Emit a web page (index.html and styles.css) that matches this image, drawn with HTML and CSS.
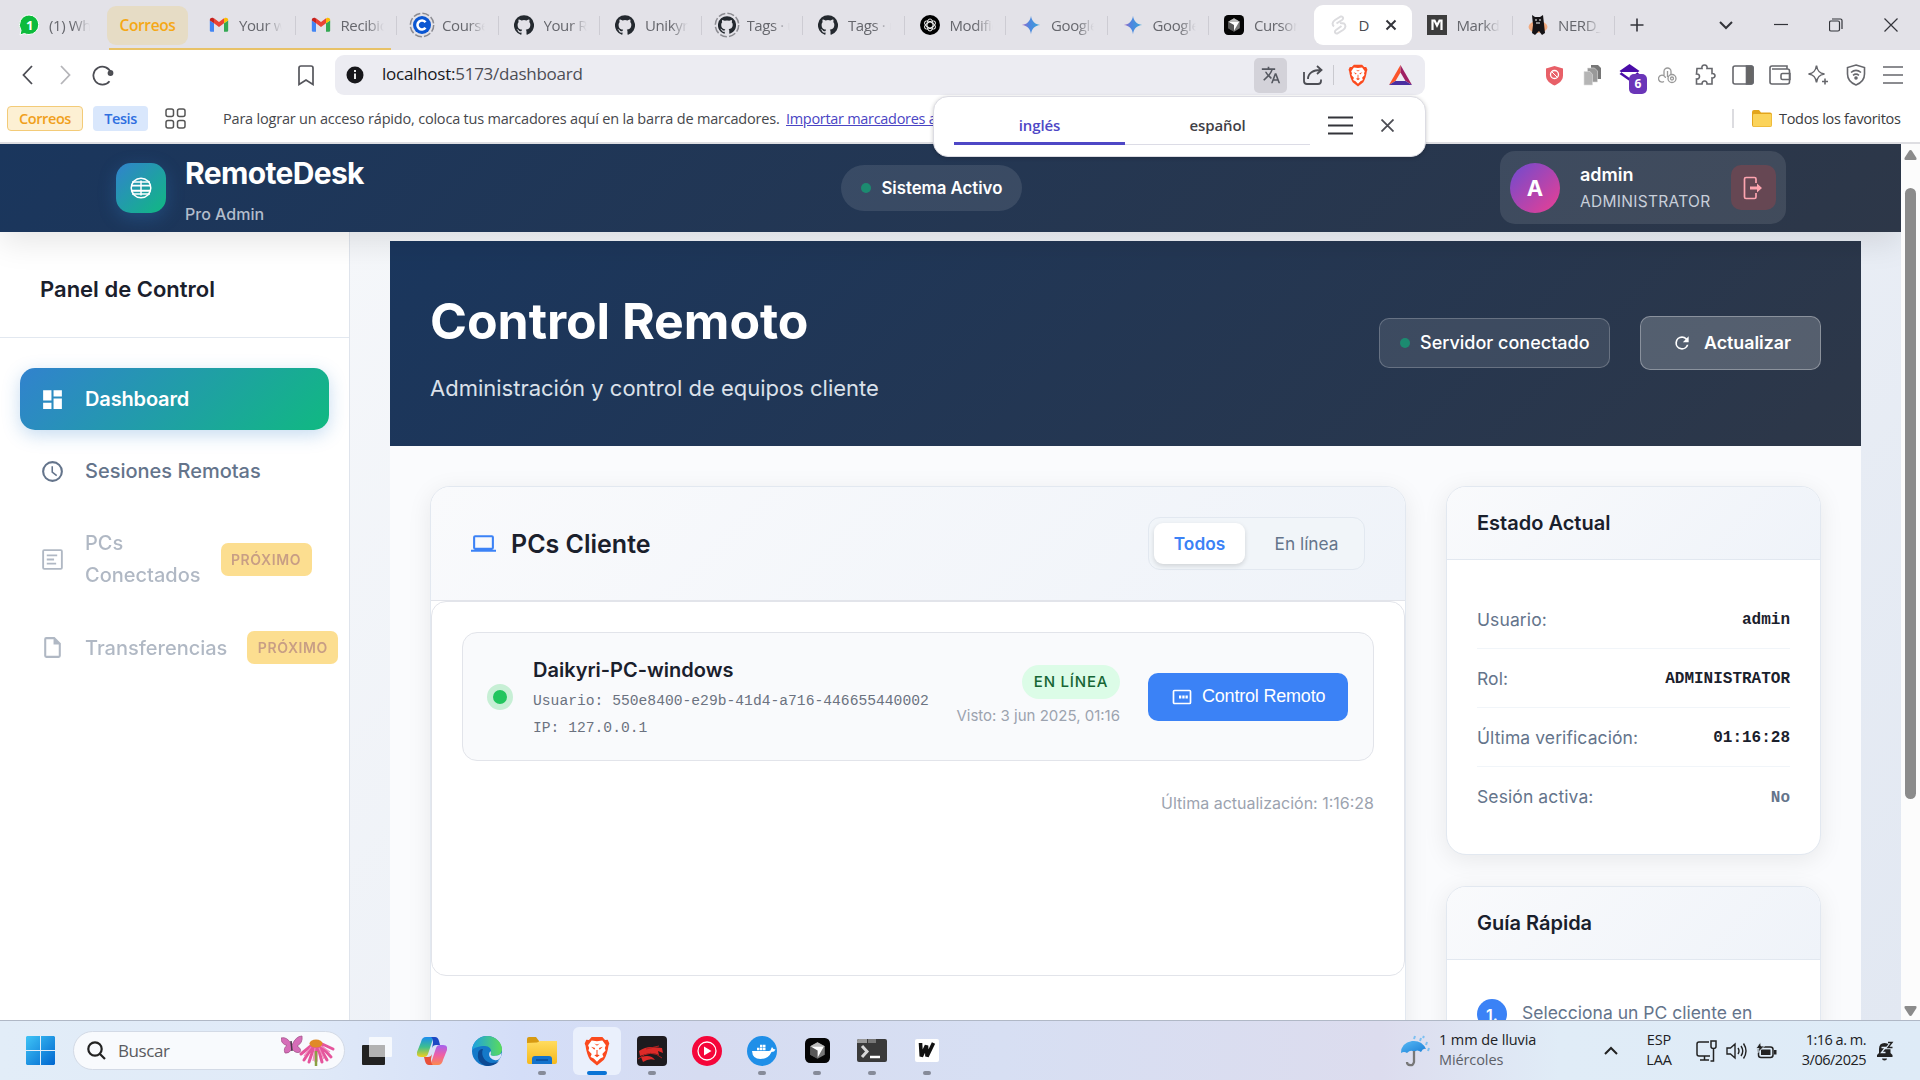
FILE: index.html
```html
<!DOCTYPE html>
<html lang="es">
<head>
<meta charset="utf-8">
<title>RemoteDesk - Dashboard</title>
<link rel="stylesheet" href="styles.css">
</head>
<body>
<svg class="defs" width="0" height="0" aria-hidden="true">
  <defs>
    <linearGradient id="gSpark" x1="0" x2="1"><stop offset="0" stop-color="#a567c0"/><stop offset=".4" stop-color="#4e86e0"/><stop offset="1" stop-color="#3aa6d8"/></linearGradient>
    <linearGradient id="gWin" x1="0" y1="0" x2="1" y2="1"><stop offset="0" stop-color="#3fc4f6"/><stop offset="1" stop-color="#0066cf"/></linearGradient>
    <linearGradient id="gEdge" x1="0" y1="0" x2="1" y2="0"><stop offset="0" stop-color="#1c9fe4"/><stop offset="1" stop-color="#5bdc5a"/></linearGradient>
    <linearGradient id="gFold" x1="0" y1="0" x2="0" y2="1"><stop offset="0" stop-color="#ffdc60"/><stop offset="1" stop-color="#f5b81c"/></linearGradient>
    <linearGradient id="gCopA" x1="0" y1="0" x2="0" y2="1"><stop offset="0" stop-color="#1b8cf0"/><stop offset=".5" stop-color="#3dbf8e"/><stop offset="1" stop-color="#f2cf1d"/></linearGradient>
    <linearGradient id="gCopB" x1="0" y1="0" x2="0" y2="1"><stop offset="0" stop-color="#a463f0"/><stop offset=".5" stop-color="#ee5fa6"/><stop offset="1" stop-color="#fb8a4f"/></linearGradient>
    <linearGradient id="gUmb" x1="0" y1="0" x2="1" y2="1"><stop offset="0" stop-color="#58b9f5"/><stop offset="1" stop-color="#1a7fd6"/></linearGradient>
    <symbol id="gmail" viewBox="0 0 24 24"><path fill="#4285f4" d="M2 20h4V10L1 6.500V19q0 1 1 1z"/><path fill="#34a853" d="M18 20h4q1 0 1-1V6.500l-5 3.500z"/><path fill="#ea4335" d="M6 10V4l6 4.500L18 4v6l-6 4.500z"/><path fill="#c5221f" d="M1 6c0-2.500 2.700-3.500 4.500-2.200L6 4.200V10L1 6.500z"/><path fill="#fbbc04" d="M23 6c0-2.500-2.700-3.500-4.500-2.200l-.5.4V10l5-3.500z"/></symbol>
    <symbol id="github" viewBox="0 0 24 24"><path fill="#24292f" d="M12 .3a12 12 0 0 0-3.800 23.400c.6.100.8-.3.8-.6v-2c-3.300.7-4-1.600-4-1.600-.6-1.400-1.400-1.800-1.400-1.800-1-.7.100-.7.100-.7 1.200 0 1.900 1.200 1.900 1.200 1 1.800 2.800 1.300 3.500 1 0-.8.400-1.300.7-1.600-2.700-.3-5.500-1.300-5.500-6 0-1.200.5-2.300 1.300-3.100-.2-.4-.6-1.600 0-3.200 0 0 1-.3 3.400 1.200a11.500 11.500 0 0 1 6 0c2.300-1.500 3.300-1.200 3.300-1.200.6 1.600.2 2.800 0 3.200.9.800 1.300 1.900 1.300 3.200 0 4.600-2.800 5.600-5.500 5.900.5.400.9 1 .9 2.200v3.300c0 .3.100.7.800.6A12 12 0 0 0 12 .3"/></symbol>
    <symbol id="spark" viewBox="0 0 24 24"><path fill="url(#gSpark)" d="M12 1c.8 6.500 4.500 10.200 11 11-6.500.8-10.200 4.500-11 11-.8-6.500-4.500-10.200-11-11 6.500-.8 10.200-4.500 11-11z"/></symbol>
    <symbol id="brave" viewBox="0 0 24 28"><path fill="#fb4a1e" d="M7 1h10l2.500 2.700L22 3.500 23.500 7l-.8 2.200c-.6 5-2.200 10-4.200 13L12 27.500 5.500 22.200c-2-3-3.600-8-4.200-13L.5 7 2 3.500l2.500.2z"/><path fill="#fff" d="M12 5l5-.8 3.300 4.500-1 2.500.7 2.300-3 3.200 1 2.800-3 1.500L12 24l-3-3-3-1.500 1-2.800-3-3.200.7-2.300-1-2.500L7 4.200z"/><path fill="#fb4a1e" d="M6.500 10l3.800 1.300-.8 1.500zM17.500 10l-3.800 1.300.8 1.500zM9.500 18l2.500-1 2.500 1-2.500 1.800zM11.500 13h1v4h-1zM9.500 7l2.500 1 2.500-1-2.500 2z"/></symbol>
    <symbol id="cursor" viewBox="0 0 24 24"><rect width="24" height="24" rx="5" fill="#050505"/><path fill="#777" d="M12 4l7 4v8l-7 4-7-4V8z"/><path fill="#bbb" d="M12 4l7 4-7 4-7-4z"/><path fill="#fff" d="M6 8.500h12L12 19v-7z"/><path fill="#444" d="M5 16V8l7 4v8z" opacity=".6"/></symbol>
  </defs>
</svg>

<div class="screen">
  <div class="tabstrip">
    <div class="pinned">
      <svg width="20" height="22" viewBox="0 0 20 22"><path d="M10 1a9.500 9.500 0 0 1 0 19.500c-2 0-3.300-.3-4.600-1L1 21l1-4.600A10 10 0 0 1 10 1z" fill="#0dbb3c" stroke="#fff" stroke-width="1"/><text x="7" y="16" class="wa-num">1</text></svg>
      <span class="tab-label tab-label--wa">(1) Wh</span>
    </div>
    <div class="group-chip">Correos</div>
    <div class="group-line"></div>
    <div class="tabs">
      <div class="tab"><svg width="20" height="20"><use href="#gmail"/></svg><span class="tab-label">Your w</span></div>
      <div class="tab"><svg width="20" height="20"><use href="#gmail"/></svg><span class="tab-label">Recibid</span></div>
      <div class="tab"><svg class="ringed" width="26" height="26" viewBox="0 0 26 26"><circle cx="13" cy="13" r="11.700" class="ring"/><circle cx="13" cy="13" r="9" fill="#0a56d2"/><path d="M16.500 10.200A4.500 4.500 0 1 0 16.500 15.800" fill="none" stroke="#fff" stroke-width="2.600"/></svg><span class="tab-label">Course</span></div>
      <div class="tab"><svg width="20" height="20"><use href="#github"/></svg><span class="tab-label">Your Re</span></div>
      <div class="tab"><svg width="20" height="20"><use href="#github"/></svg><span class="tab-label">Unikyri</span></div>
      <div class="tab"><svg class="ringed" width="26" height="26" viewBox="0 0 26 26"><circle cx="13" cy="13" r="11.700" class="ring"/><svg x="4" y="4" width="18" height="18"><use href="#github"/></svg></svg><span class="tab-label">Tags · u</span></div>
      <div class="tab"><svg width="20" height="20"><use href="#github"/></svg><span class="tab-label">Tags · u</span></div>
      <div class="tab"><svg width="20" height="20" viewBox="0 0 20 20"><circle cx="10" cy="10" r="10" fill="#000"/><g fill="none" stroke="#eee" stroke-width="1.100"><ellipse cx="10" cy="10" rx="3" ry="6"/><ellipse cx="10" cy="10" rx="3" ry="6" transform="rotate(60 10 10)"/><ellipse cx="10" cy="10" rx="3" ry="6" transform="rotate(120 10 10)"/></g></svg><span class="tab-label">Modific</span></div>
      <div class="tab"><svg width="20" height="20"><use href="#spark"/></svg><span class="tab-label">Google</span></div>
      <div class="tab"><svg width="20" height="20"><use href="#spark"/></svg><span class="tab-label">Google</span></div>
      <div class="tab tab--nosep"><svg width="20" height="20"><use href="#cursor"/></svg><span class="tab-label">Cursor</span></div>
      <div class="tab tab--active"><svg width="16" height="20" viewBox="0 0 16 20" fill="none" stroke="#dcdcdf" stroke-width="2"><path d="M5.500 8.500L11 5c2-1.500 1-4-1.200-3.500L4 5C1 7 1 10 3 11.500M10.500 11L5 15c-2 1.500-1 4 1.200 3.500L12 15c3-2 3-5 1-6.500L9 8"/></svg><span class="tab-d">D</span><svg width="12" height="12" viewBox="0 0 12 12" class="ln ln--2"><path d="M1.500 1.500l9 9M10.500 1.500l-9 9"/></svg></div>
      <div class="tab"><svg width="20" height="20" viewBox="0 0 20 20"><rect width="20" height="20" fill="#3d3d3d"/><path d="M5.500 15V5.500h2l2.500 5 2.500-5h2V15" fill="none" stroke="#fff" stroke-width="2.200"/></svg><span class="tab-label">Markdo</span></div>
      <div class="tab"><svg width="20" height="20" viewBox="0 0 20 20"><ellipse cx="10" cy="12" rx="9.500" ry="6" fill="#f2ab80"/><path d="M4 0l3 2h5l3-2 1 9 1 9-3 2-3-4-4 4-3-2 1-8z" fill="#151316"/><path d="M7 5h2M11 5h2M8 8h4" stroke="#fff"/></svg><span class="tab-label">NERD_</span></div>
    </div>
    <svg class="newtab ln ln--15" width="14" height="14" viewBox="0 0 14 14"><path d="M7 .500v13M.500 7h13"/></svg>
    <div class="winctl">
      <svg width="14" height="9" viewBox="0 0 14 9" class="ln ln--2"><path d="M1 1l6 6 6-6"/></svg>
      <svg width="14" height="14" viewBox="0 0 14 14" class="ln"><path d="M0 6.500h14"/></svg>
      <svg width="14" height="14" viewBox="0 0 14 14" class="ln"><rect x=".5" y="3" width="10" height="10" rx="1.500"/><path d="M3 1h8.500a1.500 1.500 0 0 1 1.500 1.500V11"/></svg>
      <svg width="14" height="14" viewBox="0 0 14 14" class="ln"><path d="M.5.5l13 13M13.500.500l-13 13"/></svg>
    </div>
  </div>

  <div class="toolbar">
    <div class="nav-icons">
      <svg width="11" height="20" viewBox="0 0 11 20" class="ln ln--18"><path d="M10 1L1.500 10 10 19"/></svg>
      <svg width="11" height="20" viewBox="0 0 11 20" class="ln ln--18 faint"><path d="M1 1l8.500 9L1 19"/></svg>
      <svg width="22" height="21" viewBox="0 0 22 21" class="ln ln--18"><path d="M17.500 16.200A9 9 0 1 1 19 8"/><circle cx="18.500" cy="8" r="2" fill="#555"/></svg>
    </div>
    <svg class="bm" width="16" height="21" viewBox="0 0 16 21"><path d="M1 3q0-2 2-2h10q2 0 2 2v16.500l-7-4.500-7 4.500z"/></svg>
    <div class="urlbar">
      <svg class="info" width="18" height="18" viewBox="0 0 18 18"><circle cx="9" cy="9" r="8.500" fill="#17171b"/><path d="M9 4v2M9 7.500V13" stroke="#fff" stroke-width="1.800"/></svg>
      <span class="url"><b>localhost:</b>5173/dashboard</span>
      <span class="translate-btn"><svg width="20" height="20" viewBox="0 0 24 24"><path fill="#555860" d="M12.870 15.070l-2.540-2.510.030-.030c1.740-1.940 2.980-4.170 3.710-6.530H17V4h-7V2H8v2H1v1.990h11.170C11.500 7.920 10.440 9.750 9 11.350 8.070 10.320 7.300 9.190 6.690 8h-2c.730 1.630 1.730 3.170 2.980 4.560l-5.090 5.020L4 19l5-5 3.110 3.110.760-2.040zM18.500 10h-2L12 22h2l1.120-3h4.750L21 22h2l-4.500-12zm-2.620 7l1.620-4.330L19.120 17h-3.240z"/></svg></span>
      <svg class="share ln ln--18" width="20" height="20" viewBox="0 0 20 20"><path d="M1 7v9q0 3 3 3h11q3 0 3-3v-1.500M5 14c0-6 5-9 13-9M14 1l4.500 4-4.500 4"/></svg>
      <i class="urlsep"></i>
      <svg class="brv" width="20" height="23"><use href="#brave"/></svg>
      <svg width="23" height="20" viewBox="0 0 23 20"><path d="M11.500 0L0 20l6.500-4 5-8.500z" fill="#fb542b"/><path d="M11.500 0L23 20l-6.500-4-5-8.500z" fill="#9e1f63"/><path d="M0 20h23l-6.500-4h-10z" fill="#4a2fa0"/></svg>
    </div>
    <div class="ext">
      <svg width="19" height="21" viewBox="0 0 19 21"><path d="M9.500 1L18 3.500v7c0 5-4 8-8.500 10C5 18.500 1 15.500 1 10.500v-7z" fill="#e86068"/><circle cx="9.500" cy="9.500" r="4" fill="none" stroke="#fff" stroke-width="1.300"/><path d="M7 7l5 5" stroke="#fff"/></svg>
      <svg width="19" height="22" viewBox="0 0 19 22"><path d="M8 1h7l3 3v11H8z" fill="#777"/><path d="M4.500 4h7l3 3v11h-10z" fill="#999" stroke="#ddd" stroke-width=".6"/><path d="M1 7.500h6l2.500 3V21H1z" fill="#b5b5b5" stroke="#ddd" stroke-width=".6"/></svg>
      <span class="ext-badge"><svg width="22" height="22" viewBox="0 0 22 22"><path d="M10.500 0l10 7-10 7-10-7zM.5 10l10 7 10-7-3-2H3z" fill="#4a0ca8"/></svg><em>6</em></span>
      <svg width="19" height="18" viewBox="0 0 19 18" fill="none" stroke="#999" stroke-width="1.300"><path d="M6 9V5.500a3.500 3.500 0 0 1 7 0V8"/><path d="M6 15.500A3.500 3.500 0 1 1 7.500 12"/><circle cx="14" cy="12.500" r="4"/><circle cx="14" cy="12.500" r="1.500"/><path d="M9.500 5v6"/></svg>
      <svg width="22" height="22" viewBox="0 0 22 22" class="tl"><path d="M3 4.500h5C7.500 2.500 8.500 1 10.500 1S13.500 2.500 13 4.500h5v5c4-.5 4 5 0 4.500v6h-5c.5-4-5-4-5 0H2.500v-5c4 .5 4-5.500 0-5z"/></svg>
      <svg width="22" height="20" viewBox="0 0 22 20" class="tl"><rect x="1" y="1" width="20" height="18" rx="2"/><path d="M14.500 1H19q2 0 2 2v14q0 2-2 2h-4.500z" fill="#666"/></svg>
      <svg width="22" height="20" viewBox="0 0 22 20" class="tl"><path d="M18 4V1H3Q1 1 1 3v14q0 2 2 2h15q2.500 0 2.500-2V6q0-2-2-2H3M21 8.500h-7.500q-1.500 0-1.500 1.500v3q0 1.500 1.500 1.500H21z"/></svg>
      <svg width="22" height="22" viewBox="0 0 22 22" class="tl"><path d="M9.500 1.500c.8 5.300 2.700 7.700 8 8.500-5.300.8-7.200 3.200-8 8.500-.8-5.300-2.700-7.700-8-8.500 5.300-.8 7.200-3.200 8-8.500zM18 14.500v6M15 17.500h6"/></svg>
      <svg width="20" height="22" viewBox="0 0 20 22" class="tl"><path d="M10 1l8.500 2.500V10c0 5.500-3.500 9-8.500 11-5-2-8.500-5.500-8.500-11V3.500zM5 8.500c3-2.500 7-2.500 10 0M7 11.300c2-1.500 4-1.500 6 0"/><circle cx="10" cy="14" r="1" fill="#666"/></svg>
      <svg width="20" height="18" viewBox="0 0 20 18" class="tl"><path d="M0 1h20M0 9h20M0 17h20"/></svg>
    </div>
  </div>

  <div class="bookmarks">
    <span class="bchip bchip--y">Correos</span>
    <span class="bchip bchip--b">Tesis</span>
    <svg class="grid" width="21" height="21" viewBox="0 0 21 21"><g fill="none" stroke="#555" stroke-width="1.500"><rect x="1" y="1" width="7.500" height="7.500" rx="2"/><rect x="12.500" y="1" width="7.500" height="7.500" rx="2"/><rect x="1" y="12.500" width="7.500" height="7.500" rx="2"/><rect x="12.500" y="12.500" width="7.500" height="7.500" rx="2"/></g></svg>
    <span class="bm-text">Para lograr un acceso rápido, coloca tus marcadores aquí en la barra de marcadores.</span>
    <a class="bm-link">Importar marcadores ahora</a>
    <i class="bm-sep"></i>
    <svg width="20" height="17" viewBox="0 0 20 17"><path d="M0 2q0-2 2-2h5l2 2.500h9q2 0 2 2V15q0 2-2 2H2q-2 0-2-2z" fill="#e3a51c"/><rect x="1" y="4" width="18.500" height="12.500" rx="1" fill="#fbd35a"/></svg>
    <span class="bm-all">Todos los favoritos</span>
  </div>

  <div class="popup">
    <span class="lang lang--on">inglés</span><span class="lang">español</span>
    <svg class="pmenu ln ln--2" width="25" height="19" viewBox="0 0 25 19"><path d="M0 1.500h25M0 9.500h25M0 17.500h25"/></svg>
    <svg class="pclose ln ln--18" width="13" height="13" viewBox="0 0 13 13"><path d="M.500.500l12 12M12.500.500l-12 12"/></svg>
  </div>

  <div class="viewport">
    <div class="app">
      <header class="header">
        <div class="brand">
          <div class="logo"><svg width="24" height="24" viewBox="0 0 24 24" fill="none" stroke="#fff" stroke-width="1.500"><circle cx="12" cy="12" r="9.800"/><path d="M12 4.500v15M3 6h18M3 18h18"/><path d="M2.500 9.600h19M2.500 14.800h19" stroke-width="1.900"/></svg></div>
          <div class="brand-text"><div class="brand-name">RemoteDesk</div><div class="brand-sub">Pro Admin</div></div>
        </div>
        <div class="sys"><i class="gdot"></i>Sistema Activo</div>
        <div class="user">
          <div class="avatar">A</div>
          <div class="user-text"><div class="user-name">admin</div><div class="user-role">ADMINISTRATOR</div></div>
          <div class="logout"><svg width="20" height="24" viewBox="0 0 20 24" fill="none" stroke="#fda4af" stroke-width="1.700"><path d="M13 7V3q0-1.500-1.500-1.500H3Q1.500 1.500 1.500 3v18q0 1.500 1.500 1.500h8.500Q13 22.500 13 21v-4"/><path d="M7 10.500h7V7.500l5 4.500-5 4.500v-3H7z" fill="#fda4af" stroke="none"/></svg></div>
        </div>
      </header>
      <div class="body">
        <aside class="side">
          <div class="side-title">Panel de Control</div>
          <nav class="nav">
            <div class="item item--on"><svg width="25" height="25" viewBox="0 0 24 24"><path fill="#fff" d="M13 3v6h8V3zM13 21h8V11h-8zM3 21h8v-6H3zM3 13h8V3H3z"/></svg><span>Dashboard</span></div>
            <div class="item"><svg width="25" height="25" viewBox="0 0 24 24"><path fill="#64748b" d="M12 20a8 8 0 1 0 0-16 8 8 0 0 0 0 16m0-18a10 10 0 1 1 0 20 10 10 0 0 1 0-20m.500 5v5.250l4 3-.900 1.200L11 13V7z"/></svg><span>Sesiones Remotas</span></div>
            <div class="item item--off"><svg width="25" height="25" viewBox="0 0 24 24" fill="none" stroke="#64748b" stroke-width="1.800"><rect x="3" y="3" width="18" height="18" rx="1"/><path d="M6.500 8h10M6.500 12h7M6.500 16h9"/></svg><span>PCs Conectados</span><em class="soon">PRÓXIMO</em></div>
            <div class="item item--off"><svg width="25" height="25" viewBox="0 0 24 24"><path fill="#64748b" d="M14 2H6a2 2 0 0 0-2 2v16a2 2 0 0 0 2 2h12a2 2 0 0 0 2-2V8zm4 18H6V4h7v5h5z"/></svg><span>Transferencias</span><em class="soon">PRÓXIMO</em></div>
          </nav>
        </aside>
        <main class="main">
          <div class="content">
            <section class="hero">
              <div><h1>Control Remoto</h1><p>Administración y control de equipos cliente</p></div>
              <div class="hero-actions">
                <div class="server"><i class="gdot"></i>Servidor conectado</div>
                <div class="refresh"><svg width="20" height="20" viewBox="0 0 24 24"><path fill="#fff" d="M17.650 6.350C16.200 4.900 14.210 4 12 4a8 8 0 1 0 7.730 10h-2.080A6 6 0 1 1 12 6c1.660 0 3.140.690 4.220 1.780L13 11h7V4z"/></svg>Actualizar</div>
              </div>
            </section>
            <div class="columns">
              <section class="card clients">
                <div class="clients-head">
                  <svg width="25" height="25" viewBox="0 0 24 24"><path fill="#3b82f6" d="M4 6h16v10H4zm16 12a2 2 0 0 0 2-2V6a2 2 0 0 0-2-2H4a2 2 0 0 0-2 2v10a2 2 0 0 0 2 2H0v2h24v-2z"/></svg>
                  <h2>PCs Cliente</h2>
                  <div class="toggle"><span class="on">Todos</span><span>En línea</span></div>
                </div>
                <div class="list">
                  <div class="pc">
                    <i class="online"></i>
                    <div class="pc-info"><div class="pc-name">Daikyri-PC-windows</div><div class="pc-mono">Usuario: 550e8400-e29b-41d4-a716-446655440002</div><div class="pc-mono">IP: 127.0.0.1</div></div>
                    <div class="pc-state"><span class="badge">EN LÍNEA</span><span class="seen">Visto: 3 jun 2025, 01:16</span></div>
                    <div class="ctl"><svg width="20" height="20" viewBox="0 0 20 20"><rect x="1.500" y="3.500" width="17" height="13" rx="1" fill="none" stroke="#fff" stroke-width="1.700"/><path d="M7 8.500h2.300v3H7zM10.300 8.500h2.300v3h-2.300zM13.500 8.500h2.300v3h-2.300z" fill="#fff"/></svg>Control Remoto</div>
                  </div>
                  <div class="updated">Última actualización: 1:16:28</div>
                </div>
              </section>
              <div class="right">
                <section class="card status">
                  <h3>Estado Actual</h3>
                  <dl>
                    <div><dt>Usuario:</dt><dd>admin</dd></div>
                    <div><dt>Rol:</dt><dd>ADMINISTRATOR</dd></div>
                    <div><dt>Última verificación:</dt><dd>01:16:28</dd></div>
                    <div><dt>Sesión activa:</dt><dd class="muted">No</dd></div>
                  </dl>
                </section>
                <section class="card guide">
                  <h3>Guía Rápida</h3>
                  <div class="step"><b>1.</b><span>Selecciona un PC cliente en</span></div>
                </section>
              </div>
            </div>
          </div>
        </main>
      </div>
    </div>
    <div class="scrollbar">
      <svg width="13" height="10" viewBox="0 0 13 10"><path d="M6.500 0q1 0 1.500 1l4.500 7q.5 2-1 2h-10q-1.500 0-1-2L5 1q.500-1 1.500-1z" fill="#8b8b8b"/></svg>
      <i class="thumb"></i>
      <svg width="13" height="10" viewBox="0 0 13 10"><path d="M6.500 10q1 0 1.500-1l4.500-7q.5-2-1-2h-10q-1.500 0-1 2L5 9q.500 1 1.500 1z" fill="#8b8b8b"/></svg>
    </div>
  </div>

  <div class="taskbar">
    <svg class="start" width="29" height="29" viewBox="0 0 29 29"><path fill="url(#gWin)" d="M1 0h13v14H0V1zM15 0h13l1 1v13H15zM0 15h14v14H1l-1-1zM15 15h14v13l-1 1H15z"/></svg>
    <div class="search">
      <svg width="19" height="19" viewBox="0 0 19 19" fill="none" stroke="#222" stroke-width="2.200"><circle cx="8" cy="8" r="6.700"/><path d="M13 13l5 5"/></svg>
      <span>Buscar</span>
      <svg class="flower" width="54" height="32" viewBox="0 0 54 32"><path d="M11 10Q6 1 0 3q0 6 6 7.500Q2 13 4 18q4 1 7-4 4 5 8 3 2-3-3-6 6-3 5-10-6 0-10 9z" fill="#d66db8" stroke="#a4568c" stroke-width=".8"/><path d="M10 6l1 10" stroke="#4b3a4a" stroke-width="1.500"/><g stroke="#e5559c" stroke-width="3" stroke-linecap="round"><path d="M31 10L20 19M32 11l-9 14M33 12l-5 15M35 12v14M37 12l4 15M38 11l8 14M39 10l11 12M39 8l13 6"/></g><g stroke="#f08cbc" stroke-width="1.200"><path d="M30 12l-7 9M34 13l-2 13M38 13l5 11M40 11l9 6"/></g><path d="M35 16v15" stroke="#8aa043" stroke-width="2.500"/><ellipse cx="35" cy="8.500" rx="6.500" ry="4" fill="#e08a28"/></svg>
    </div>
    <div class="apps">
      <span><svg width="30" height="28" viewBox="0 0 30 28"><rect x="0" y="8" width="23" height="20" rx="1" fill="#222"/><rect x="7" y="0" width="23" height="20" rx="1" fill="#fff" opacity=".75"/><path d="M7 8h16v12H7z" fill="#aaa" opacity=".7"/></svg></span>
      <span><svg width="30" height="28" viewBox="0 0 30 28"><path d="M9 0h9l-2 2-5 15q-1 3-4 3H4q-5 0-4-5L4 5q1-5 5-5z" fill="url(#gCopA)"/><path d="M21 28h-9l2-2 5-15q1-3 4-3h3q5 0 4 5l-4 10q-1 5-5 5z" fill="url(#gCopB)"/><path d="M14 0h4q3 0 4 4l1 4h-4q-3 0-4 3l1-5q0-5-2-6z" fill="#1c49c4"/><path d="M16 28h-4q-3 0-4-4l-1-4h4q3 0 4-3l-1 5q0 5 2 6z" fill="#e8503a"/></svg></span>
      <span><svg width="30" height="30" viewBox="0 0 30 30"><circle cx="15" cy="15" r="15" fill="#1479c9"/><path d="M0 14C1 5 8 0 15 0c9 0 15 7 15 13 0 5-4 7-8 7-3 0-4-1-3-3 1-4-2-7-6-7-6 0-11 2-13 4z" fill="url(#gEdge)"/><path d="M11 13c-3 7 3 14 9 14 3 0 5-1 7-2-3 4-8 5-12 5C9 29 5 24 6 18c0-3 2-5 5-5z" fill="#0c4a94"/><path d="M19 17c-1 2 0 3 3 3 3 0 6-1 7.500-3 0 5-3 8-7 7-5-1-7-6-4-9z" fill="#dfe6f8"/></svg></span>
      <span class="run"><svg width="30" height="27" viewBox="0 0 30 27"><path d="M0 2q0-2 2-2h7l3 4v6H0z" fill="#d79a12"/><path d="M0 6l10-.5L13 4h17v21q0 2-2 2H2q-2 0-2-2z" fill="url(#gFold)"/><path d="M5 27v-5q0-3 3-3h14q3 0 3 3v5z" fill="#1372cc"/><path d="M9 23h12" stroke="#0a4d99" stroke-width="1.500"/></svg></span>
      <span class="run run--on"><svg width="26" height="30"><use href="#brave"/></svg></span>
      <span class="run"><svg width="30" height="30" viewBox="0 0 30 30"><rect width="30" height="30" rx="4" fill="#1d1a1e"/><path d="M2 15q6-4 12-4l11 1 1 5-5-2 1 4q-8-4-19 1zM4 21q10-3 14 3-6-2-12 2z" fill="#dd2a28"/><path d="M1 23q13-11 24-1M9 13l13-3" stroke="#b3201f" fill="none"/></svg></span>
      <span><svg width="30" height="30" viewBox="0 0 30 30"><circle cx="15" cy="15" r="15" fill="#f5063a"/><circle cx="15" cy="15" r="9" fill="none" stroke="#fff" stroke-width="1.300"/><path d="M12 10.500v9l7.500-4.500z" fill="#fff"/></svg></span>
      <span class="run"><svg width="30" height="30" viewBox="0 0 30 30"><circle cx="15" cy="15" r="15" fill="#1f8fe8"/><path d="M5 15h17q2 0 2-2l1-2 1.500 2 2 .500q-1 2.500-4 2.500-3 7-11 7-8 0-8.500-8zM10 11.800h2.500v2.500H10zM13 11.800h2.500v2.500H13zM16 11.800h2.500v2.500H16zM13 8.800h2.500v2.500H13zM16 8.800h2.500v2.500H16z" fill="#fff"/></svg></span>
      <span class="run"><svg width="25" height="25"><use href="#cursor"/></svg></span>
      <span class="run"><svg width="30" height="23" viewBox="0 0 30 23"><rect width="30" height="23" rx="2" fill="#3a3a3a"/><path d="M0 4V2q0-2 2-2h8v4z" fill="#999"/><path d="M11 0h8v4h-8z" fill="#777"/><path d="M5 7l5 5.500-5 5.500" fill="none" stroke="#d8d8d8" stroke-width="3"/><path d="M13 18h10" stroke="#fff" stroke-width="2.500"/></svg></span>
      <span class="run"><svg width="24" height="23" viewBox="0 0 24 23"><rect width="24" height="23" rx="2" fill="#fff"/><path d="M5.500 4l.8 13.500 5.200-11 .5 11L18.500 4" fill="none" stroke="#111" stroke-width="3.600"/></svg></span>
    </div>
    <div class="weather"><svg width="30" height="32" viewBox="0 0 30 32"><path d="M0 18Q0 8 11 6q10-1 14 8-3-1-5 3-4-3-7 0-3-3-7 1-3-2-6 0z" fill="url(#gUmb)"/><path d="M13 16v11q-1 4-4 3-3 0-3-3" fill="none" stroke="#777" stroke-width="2.300"/><path d="M14 1l-1 3M20 3l-1 3M26 7l-1 3M23 1l-1 2M28 13l-1 3" stroke="#7cc0f2" stroke-width="2"/></svg>
      <div><div>1 mm de lluvia</div><div class="dim">Miércoles</div></div></div>
    <svg class="up" width="14" height="9" viewBox="0 0 14 9" fill="none" stroke="#222" stroke-width="2"><path d="M1 8l6-6 6 6"/></svg>
    <div class="kbd"><div>ESP</div><div>LAA</div></div>
    <div class="tray">
      <svg width="21" height="22" viewBox="0 0 21 22" fill="none" stroke="#222" stroke-width="1.500"><path d="M13 2H3Q1 2 1 4v10q0 2 2 2h11M4 20h9M8.500 16v4M17.500 9v12h-3M15 1h5v5.500q0 2-2.500 2T15 6.500z"/></svg>
      <svg width="21" height="18" viewBox="0 0 21 18" fill="none" stroke="#222" stroke-width="1.400"><path d="M1 6h3.500L9 2v14l-4.500-4H1zM12 6q2 3 0 6M15 4q3.500 5 0 10M17.500 1.500q5 7.500 0 15"/></svg>
      <svg width="21" height="17" viewBox="0 0 21 17"><rect x="2.500" y="5" width="14.500" height="10.500" rx="2.500" fill="none" stroke="#222" stroke-width="1.500"/><rect x="5" y="7.500" width="9.500" height="5.500" fill="#222"/><path d="M18 8h2.500v4.500H18z" fill="#222"/><path d="M4.500 0L0 6.500h3L1.500 11 8.500 4H5z" fill="#222" stroke="#e0ecf7" stroke-width=".8"/></svg>
    </div>
    <div class="clock"><div>1:16 a. m.</div><div>3/06/2025</div></div>
    <svg class="bell" width="18" height="20" viewBox="0 0 18 20"><path d="M1 16v-2l2-2V8q0-6 5.500-6 6 0 6 6v4l2 2v2zM6 17.500h5q0 2-2.500 2t-2.500-2z" fill="#222"/><path d="M5.500 6.500h4l-4 5h4" fill="none" stroke="#e0ecf7" stroke-width="1.300"/><path d="M12 1.500h4l-4 5h4.500" fill="none" stroke="#e0ecf7" stroke-width="3.500"/><path d="M12 1.500h4l-4 5h4.500" fill="none" stroke="#222" stroke-width="1.400"/></svg>
  </div>
</div>
</body>
</html>
```
FILE: styles.css
```css
* { box-sizing: border-box; }
body { margin: 0; background: #fff; font-family: Inter, "Liberation Sans", sans-serif; }
svg { display: block; flex: none; }
em, i { font-style: normal; }
.defs { position: absolute; }
.screen { position: relative; width: 1920px; height: 1080px; overflow: hidden; display: flex; flex-direction: column; }
.ln { fill: none; stroke: #33343a; stroke-width: 1.2; }
.ln--15 { stroke-width: 1.6; }
.ln--18 { stroke-width: 1.8; stroke: #4c4d54; }
.ln--2 { stroke-width: 2; }
.faint { stroke: #b5b5b9; }
.tl { fill: none; stroke: #66676c; stroke-width: 1.6; }

/* browser chrome */
.tabstrip, .toolbar, .bookmarks, .popup, .taskbar { font-family: "Open Sans", "Noto Sans", sans-serif; }
.tabstrip { position: relative; height: 50px; flex: none; background: #e3e2e8; display: flex; align-items: center; }
.tabstrip > * { flex: none; }
.pinned { width: 107px; padding-left: 19px; display: flex; align-items: center; gap: 10px; }
.wa-num { font: bold 13px "Open Sans", sans-serif; fill: #fff; }
.group-chip { width: 81px; height: 39px; border-radius: 9px; background: #e6dcc5; color: #f5a816; font-weight: 600; font-size: 15.5px; letter-spacing: -.4px; line-height: 39px; text-align: center; }
.group-line { position: absolute; left: 109px; top: 48px; width: 282px; height: 2px; background: #e8c267; }
.tabs { display: flex; margin-left: 7px; }
.tab { width: 101.5px; flex: none; height: 40px; display: flex; align-items: center; gap: 10px; padding-left: 14px; position: relative; }
.tab::after { content: ""; position: absolute; right: 1px; top: 11px; width: 1px; height: 19px; background: #cdccd3; }
.tab--nosep::after, .tab--active::after { display: none; }
.ringed { margin: 0 -3px; }
.ring { fill: none; stroke: #8b8b91; stroke-width: 1.5; stroke-dasharray: 7 2.2; }
.tab-label { width: 43px; overflow: hidden; white-space: nowrap; color: #66676d; font-size: 15px; letter-spacing: -.4px; -webkit-mask-image: linear-gradient(90deg, #000 60%, transparent 100%); }
.tab-label--wa { width: 41px; }
.tab--active { width: 98px; margin: 0 1px 0 2px; background: #fff; border-radius: 9px; padding-left: 17px; gap: 0; }
.tab-d { font-size: 15px; width: 28px; padding-left: 12px; margin-right: 10px; color: #4a4b50; }
.newtab { margin-left: 14px; }
.winctl { margin-left: auto; margin-right: 22px; width: 179px; display: flex; justify-content: space-between; align-items: center; }
.toolbar { height: 50px; flex: none; display: flex; align-items: center; }
.nav-icons { display: flex; width: 298px; padding-left: 22px; gap: 27px; align-items: center; }
.nav-icons svg:last-child { margin-left: -6px; }
.bm { fill: none; stroke: #55565c; stroke-width: 1.7; margin-right: 21px; }
.urlbar { width: 1090px; height: 40px; border-radius: 9px; background: #ececf2; display: flex; align-items: center; padding-left: 11px; }
.url { font-size: 17px; letter-spacing: -.25px; line-height: 24px; margin: -2px 0 0 18px; color: #4d4e55; }
.url b { font-weight: 400; color: #17181c; }
.translate-btn { margin-left: auto; width: 33px; height: 35px; border-radius: 5px; background: #d3d2d9; display: grid; place-items: center; }
.share { margin-left: 16px; }
.urlsep { width: 1px; height: 20px; background: #c9c9cf; margin: 0 14px 0 10px; }
.brv { margin-right: 21px; }
.urlbar > svg:last-child { margin-right: 13px; }
.ext { margin-left: auto; width: 376px; margin-right: 8px; display: grid; grid-template-columns: repeat(10, 37.6px); justify-items: center; align-items: center; }
.ext-badge { position: relative; }
.ext-badge em { position: absolute; left: 10px; top: 10px; width: 18px; height: 20px; border-radius: 5px; background: #6a35b8; color: #fff; font: 700 12px/20px "Open Sans", sans-serif; text-align: center; }
.bookmarks { height: 44px; flex: none; display: flex; align-items: center; padding: 0 17px 5px 7px; border-bottom: 2px solid #dedee2; font-size: 14.5px; white-space: nowrap; }
.bchip { height: 25px; border-radius: 4px; line-height: 23px; text-align: center; font-weight: 600; letter-spacing: -.4px; }
.bchip--y { width: 76px; border: 1.5px solid #f3cb78; background: #fdf0d3; color: #f0a01c; }
.bchip--b { width: 55px; margin-left: 10px; line-height: 25px; background: #d9e7fc; color: #2f6fe0; }
.grid { margin-left: 17px; }
.bm-text { margin-left: 37px; width: 563px; color: #46474c; letter-spacing: -.2px; }
.bm-link { width: 190px; overflow: hidden; color: #4a45c4; text-decoration: underline; letter-spacing: -.3px; }
.bm-sep { margin-left: auto; width: 2px; height: 19px; background: #dcdce0; margin-right: 18px; }
.bm-all { margin-left: 7px; width: 124px; letter-spacing: -.3px; color: #3a3b40; }
.popup { position: absolute; z-index: 5; left: 933px; top: 96px; width: 493px; height: 61px; border-radius: 15px; background: #fff; border: 1px solid #dcdce3; box-shadow: 0 1px 4px rgba(0,0,0,.2); padding: 0 0 2px 20px; display: flex; align-items: center; font-size: 15px; font-weight: 600; color: #3f4046; }
.lang { width: 185px; height: 38px; line-height: 37px; text-align: center; margin-top: 1px; border-bottom: 1px solid #dcdce6; letter-spacing: -.1px; }
.lang--on { width: 171px; color: #4e47c6; border-bottom: 3px solid #4e47c6; }
.pmenu { margin-left: 18px; }
.pclose { margin-left: 28px; }

/* page */
.viewport { height: 876px; flex: none; display: flex; overflow: hidden; }
.app { width: 1901px; height: 876px; overflow: hidden; display: flex; flex-direction: column; }
.header { position: relative; z-index: 2; height: 88px; flex: none; padding: 0 115px 1px 116px; display: flex; justify-content: space-between; align-items: center; background: linear-gradient(135deg, #1a365d 0%, #2d3748 100%); box-shadow: 0 10px 32px rgba(0,0,0,.1); color: #fff; }
.brand { display: flex; align-items: center; gap: 19px; }
.logo { width: 50px; height: 50px; border-radius: 15px; background: linear-gradient(135deg, #3182ce, #10b981); display: grid; place-items: center; box-shadow: 0 5px 18px rgba(49,130,206,.3); }
.brand-name { font-size: 30px; font-weight: 700; letter-spacing: -.65px; line-height: 48px; }
.brand-sub { font-size: 16px; font-weight: 500; color: #b3bdcc; line-height: 26px; margin-top: 4px; }
.sys { height: 46px; width: 181px; border-radius: 23px; background: rgba(255,255,255,.1); display: flex; align-items: center; padding-left: 20px; gap: 10px; font-size: 16.8px; font-weight: 600; white-space: nowrap; }
.gdot { width: 10px; height: 10px; border-radius: 50%; background: #1c8b70; flex: none; }
.user { width: 286px; height: 73px; border-radius: 15px; background: rgba(255,255,255,.1); display: flex; align-items: center; padding: 0 10px; }
.avatar { width: 50px; height: 50px; border-radius: 50%; background: linear-gradient(135deg, #6d4bd0, #ec3f92); display: grid; place-items: center; font-size: 22px; font-weight: 700; margin-right: 20px; }
.user-name { font-size: 18px; font-weight: 600; line-height: 27px; }
.user-role { font-size: 15.5px; line-height: 26px; margin-top: 1px; color: #c8cfda; letter-spacing: .3px; }
.logout { margin-left: auto; width: 45px; height: 45px; border-radius: 10px; background: #664753; display: grid; place-items: center; }
.body { flex: 1; display: flex; min-height: 0; }
.side { width: 350px; flex: none; background: #fff; border-right: 1px solid #dfe4ec; }
.side-title { height: 106px; padding: 40px 40px 0; font-size: 22px; font-weight: 600; line-height: 35px; color: #1a202c; border-bottom: 1px solid #e2e8f0; }
.nav { padding: 30px 0 0 20px; display: flex; flex-direction: column; gap: 10px; }
.item { width: 309px; padding: 15px 20px; display: flex; align-items: center; gap: 20px; border-radius: 15px; font-size: 20px; font-weight: 500; line-height: 32px; color: #64748b; }
.item--on { color: #fff; font-weight: 600; letter-spacing: -.15px; background: linear-gradient(135deg, #3182ce, #10b981); box-shadow: 0 5px 18px rgba(49,130,206,.28); }
.item--off { opacity: .5; }
.item--off span { width: min-content; }
.soon { width: 91px; height: 33px; flex: none; border-radius: 7px; background: #fbbf24; color: #92400e; font-size: 14px; font-weight: 600; letter-spacing: .6px; line-height: 33px; text-align: center; }
.main { flex: 1; padding: 9px 40px 0; background: linear-gradient(135deg, #f5f7fa, #e2e8f2); min-height: 0; }
.content { height: 900px; background: #fafbfd; }
.hero { height: 205px; padding: 0 40px; display: flex; justify-content: space-between; align-items: center; background: linear-gradient(135deg, #1a365d, #2d3748); color: #fff; }
.hero h1 { margin: 0; font-size: 50px; font-weight: 700; line-height: 80px; letter-spacing: -.05px; }
.hero p { margin: 10px 0 0; font-size: 22px; line-height: 35px; color: #dbe1ea; }
.hero-actions { display: flex; gap: 30px; align-items: center; margin-bottom: 2px; }
.server { width: 231px; height: 50px; border-radius: 10px; border: 1px solid rgba(255,255,255,.22); background: rgba(255,255,255,.1); display: flex; align-items: center; padding-left: 20px; gap: 10px; font-size: 18px; font-weight: 500; white-space: nowrap; }
.refresh { width: 181px; height: 54px; border-radius: 10px; border: 1px solid rgba(255,255,255,.32); background: rgba(255,255,255,.2); display: flex; align-items: center; padding-left: 31px; gap: 12px; font-size: 17.8px; font-weight: 600; }
.columns { padding: 40px; display: flex; gap: 40px; }
.card { background: #fff; border: 1px solid #e2e8f0; border-radius: 20px; box-shadow: 0 5px 25px rgba(0,0,0,.08); overflow: hidden; }
.clients { width: 976px; height: 700px; }
.clients-head { height: 114px; padding: 0 40px; display: flex; align-items: center; background: linear-gradient(135deg, #f9fafc, #eff3f9); border-bottom: 1px solid #e2e4ea; }
.clients-head h2 { margin: 0 0 0 15px; font-size: 25px; font-weight: 600; color: #1a202c; }
.toggle { margin-left: auto; width: 217px; height: 53px; padding: 5px; border: 1px solid #e2e8f0; border-radius: 12px; background: #f1f5f9; display: flex; font-size: 17.3px; color: #64748b; }
.toggle span { flex: 1; display: grid; place-items: center; padding-left: 4px; }
.toggle .on { flex: 0 0 91px; padding-left: 0; margin-right: 5px; border-radius: 9px; background: #fff; color: #3b82f6; font-weight: 600; box-shadow: 0 2px 5px rgba(0,0,0,.14); }
.list { height: 375px; border: 1px solid #e2e4ea; border-radius: 15px; padding: 30px; }
.pc { height: 129px; border: 1px solid #e2e4ea; border-radius: 15px; background: #f9fafc; display: flex; align-items: center; padding: 0 25px 0 24px; }
.online { width: 26px; height: 26px; border-radius: 50%; background: #22c55e; border: 6.5px solid #c7efd5; flex: none; }
.pc-info { margin-left: 20px; }
.pc-name { font-size: 20px; font-weight: 600; color: #1a202c; line-height: 32px; margin-top: 2px; margin-bottom: 2px; }
.pc-mono { font: 14.67px/27px "Liberation Mono", monospace; color: #6b7280; }
.pc-state { margin-left: auto; display: flex; flex-direction: column; align-items: flex-end; }
.badge { width: 98px; height: 34px; border-radius: 17px; background: #dcfce7; color: #166534; font-size: 15px; font-weight: 500; letter-spacing: .8px; line-height: 34px; text-align: center; margin-top: -1px; }
.seen { font-size: 15px; color: #9ca3af; line-height: 24px; margin-top: 5px; }
.ctl { margin-left: 28px; width: 200px; height: 48px; border-radius: 10px; background: #3b82f6; color: #fff; display: flex; align-items: center; padding-left: 24px; gap: 10px; font: 18px "Liberation Sans", Arial, sans-serif; letter-spacing: -.2px; white-space: nowrap; }
.updated { text-align: right; font-size: 16px; line-height: 26px; margin-top: 29px; color: #9ca3af; }
.right { width: 375px; display: flex; flex-direction: column; gap: 31px; }
.status { height: 369px; }
.guide { height: 300px; }
.card h3 { margin: 0; height: 73px; padding-left: 30px; line-height: 72px; font-size: 20px; font-weight: 600; color: #1a202c; background: linear-gradient(135deg, #f9fafc, #eff3f9); border-bottom: 1px solid #e2e8f0; }
dl { margin: 0; padding: 30px; }
dl div { height: 59px; display: flex; justify-content: space-between; align-items: center; border-bottom: 1px solid #f1f5f9; font-size: 17.5px; }
dl div:last-child { border: 0; }
dt { color: #64748b; letter-spacing: .1px; }
dd { margin: 2px 0 0; font: 700 16px "Liberation Mono", monospace; color: #1a202c; }
dd.muted { color: #64748b; }
.step { padding: 39px 30px; display: flex; gap: 15px; align-items: flex-start; font-size: 17.5px; color: #64748b; }
.step b { width: 30px; height: 30px; border-radius: 50%; background: #3b82f6; color: #fff; font-size: 16px; font-weight: 600; line-height: 32px; text-align: center; }
.step span { line-height: 28px; }
.scrollbar { width: 19px; height: 876px; background: #fcfcfc; display: flex; flex-direction: column; align-items: center; padding: 6px 0 4px; }
.thumb { width: 11px; height: 611px; margin: 28px 0 auto; border-radius: 6px; background: #8b8b8b; }

/* taskbar */
.taskbar { height: 60px; flex: none; border-top: 1px solid #b0b8c6; background: linear-gradient(90deg, #e2edf8 0, #e0eaf8 300px, #d4def8 520px, #d6dcf1 700px, #d7dff3 1000px, #dcdcee 1380px, #e0ecf7 1560px, #deebf7 100%); display: flex; align-items: center; color: #202124; padding-left: 26px; }
.taskbar > * { flex: none; }
.search { margin-left: 18px; width: 272px; height: 39px; border-radius: 20px; background: #f8fafd; border: 1px solid #d3dae6; display: flex; align-items: center; padding-left: 13px; font-size: 17px; letter-spacing: -.4px; color: #5a5b60; }
.search span { margin-left: 12px; }
.flower { margin: 0 9px 0 auto; }
.apps { display: flex; margin-left: 8px; gap: 7px; }
.apps span { width: 48px; height: 48px; display: grid; place-items: center; border-radius: 6px; position: relative; }
.run::after { content: ""; position: absolute; left: 20px; bottom: 0; width: 8px; height: 4px; border-radius: 2px; background: #868b99; }
.run--on { background: #eaf0fc; }
.run--on::after { left: 14px; width: 20px; background: #0a74d6; }
.weather { margin-left: 450px; width: 197px; display: flex; align-items: center; gap: 8px; font-size: 14.5px; line-height: 20px; letter-spacing: -.1px; white-space: nowrap; }
.weather > div, .kbd, .clock { margin-top: -2px; }
.dim { color: #5c6068; }
.up { margin-left: 6px; }
.kbd { width: 82px; text-align: center; font-size: 14.5px; line-height: 20px; letter-spacing: -.1px; }
.tray { display: flex; align-items: center; gap: 9px; margin-left: -4px; }
.clock { margin-left: auto; text-align: right; font-size: 14.5px; line-height: 20px; letter-spacing: -.5px; }
.bell { margin: 0 26px 0 10px; }
```
